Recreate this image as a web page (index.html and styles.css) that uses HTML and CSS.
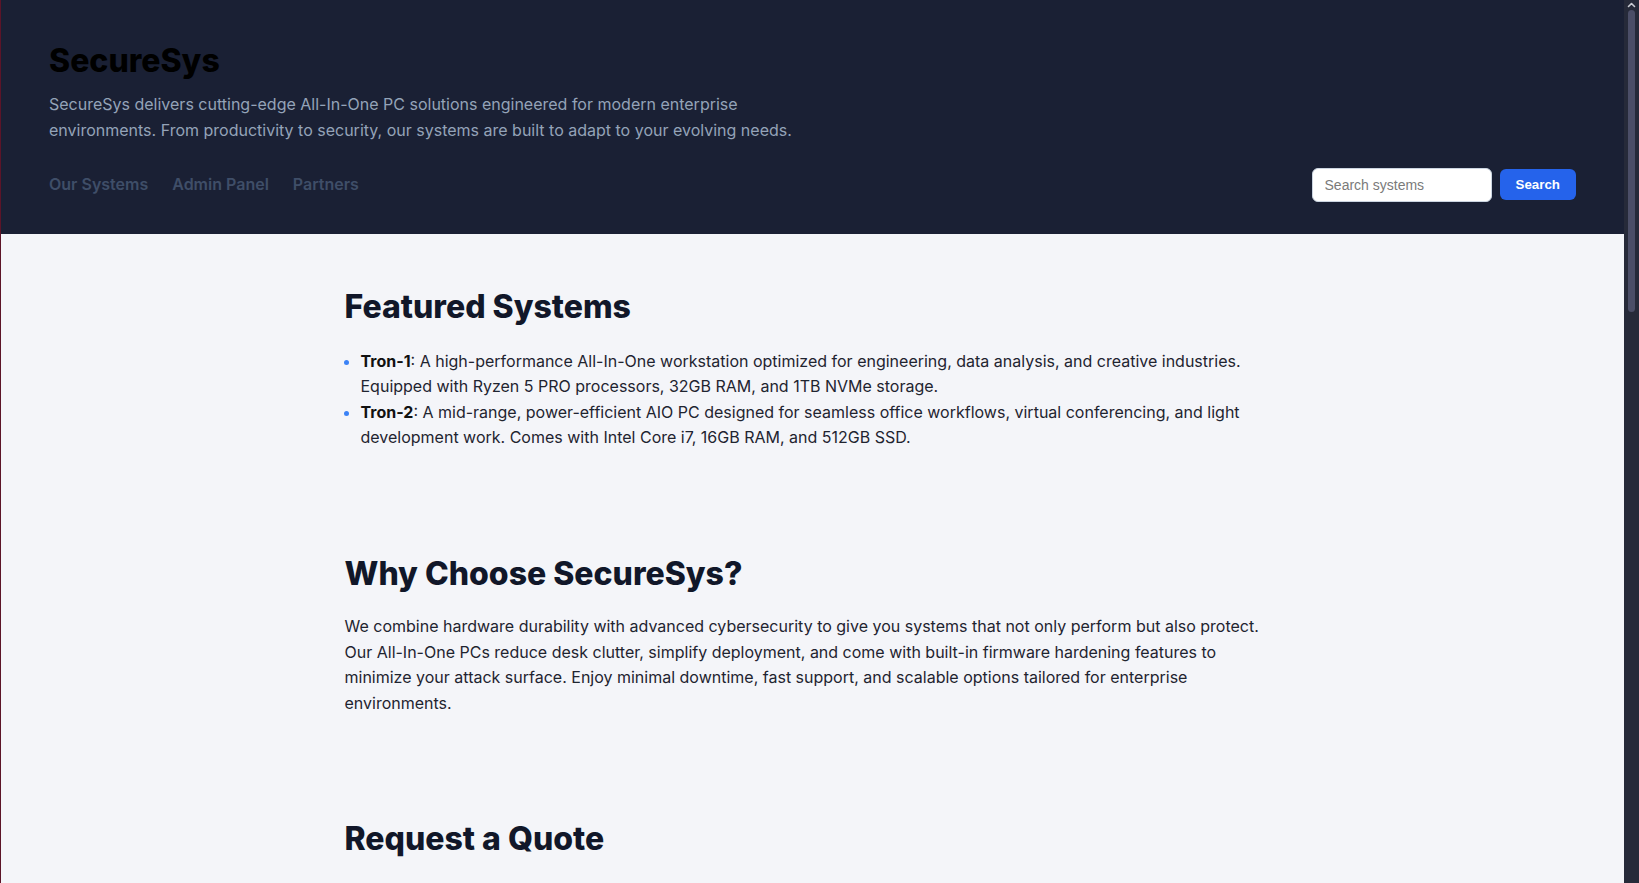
FILE: index.html
```html
<!DOCTYPE html>
<html lang="en">
<head>
<meta charset="utf-8">
<title>SecureSys</title>
<link rel="stylesheet" href="styles.css">
</head>
<body>
<header class="site-header">
  <h1 class="brand">SecureSys</h1>
  <p class="tagline">SecureSys delivers cutting-edge All-In-One PC solutions engineered for modern enterprise environments. From productivity to security, our systems are built to adapt to your evolving needs.</p>
  <div class="header-row">
    <nav class="nav">
      <a href="#" class="nav-link">Our Systems</a>
      <a href="#" class="nav-link">Admin Panel</a>
      <a href="#" class="nav-link">Partners</a>
    </nav>
    <form class="search" onsubmit="return false">
      <input class="search-input" type="text" placeholder="Search systems">
      <button class="search-btn" type="submit">Search</button>
    </form>
  </div>
</header>
<main class="content">
  <section class="section">
    <h2 class="section-title">Featured Systems</h2>
    <ul class="systems">
      <li><strong>Tron-1</strong>: A high-performance All-In-One workstation optimized for engineering, data analysis, and creative industries. Equipped with Ryzen 5 PRO processors, 32GB RAM, and 1TB NVMe storage.</li>
      <li><strong>Tron-2</strong>: A mid-range, power-efficient AIO PC designed for seamless office workflows, virtual conferencing, and light development work. Comes with Intel Core i7, 16GB RAM, and 512GB SSD.</li>
    </ul>
  </section>
  <section class="section">
    <h2 class="section-title">Why Choose SecureSys?</h2>
    <p class="text">We combine hardware durability with advanced cybersecurity to give you systems that not only perform but also protect. Our All-In-One PCs reduce desk clutter, simplify deployment, and come with built-in firmware hardening features to minimize your attack surface. Enjoy minimal downtime, fast support, and scalable options tailored for enterprise environments.</p>
  </section>
  <section class="section">
    <h2 class="section-title">Request a Quote</h2>
    <p class="text">Tell us about your organization and our team will prepare a tailored proposal for your deployment.</p>
  </section>
</main>
<div class="scrollbar" aria-hidden="true">
  <svg class="scroll-arrow" width="15" height="10" viewBox="0 0 15 10"><path d="M4.5 6.5 L7.5 3.5 L10.5 6.5" fill="none" stroke="#c9cbd3" stroke-width="1.6" stroke-linecap="round" stroke-linejoin="round"/></svg>
  <div class="scroll-thumb"></div>
</div>
</body>
</html>
```
FILE: styles.css
```css
* { box-sizing: border-box; }
html { margin: 0; padding: 0; }
body {
  margin: 0;
  padding: 0 15px 0 0;
  border-left: 1px solid #5c1428;
  background: #f4f5f9;
  color: #1f2430;
  font-family: Inter, "Noto Sans", sans-serif;
  font-size: 16px;
  line-height: 1.6;
}
.site-header {
  background: #1a2034;
  padding: 42px 48px 32px 48px;
}
.brand {
  margin: 0 0 12px 0;
  font-size: 32px;
  font-weight: 800;
  line-height: 1.2;
  color: #000;
}
.tagline {
  margin: 0 0 24px 0;
  max-width: 760px;
  color: #94a3b8;
}
.header-row {
  display: flex;
  align-items: center;
  justify-content: space-between;
}
.nav { display: flex; gap: 24px; }
.nav-link {
  color: #3f4e68;
  text-decoration: none;
  font-weight: 600;
}
.search { display: flex; align-items: center; gap: 8px; }
.search-input {
  width: 180px;
  height: 34px;
  padding: 8px 12px;
  border: 1px solid #cbd5e1;
  border-radius: 6px;
  font-family: "Liberation Sans", Arial, sans-serif;
  font-size: 14px;
  background: #fff;
}
.search-input::placeholder { color: #7a7a7a; }
.search-btn {
  height: 31px;
  padding: 0 16px;
  border: 0;
  border-radius: 6px;
  background: #2563eb;
  color: #fff;
  font-family: "Liberation Sans", Arial, sans-serif;
  font-size: 13.33px;
  font-weight: 700;
}
.content {
  max-width: 1000px;
  margin: 0 auto;
  padding: 55px 32px 60px;
}
.section { margin-bottom: 105px; }
.section-title {
  margin: 0 0 24px 0;
  font-size: 32px;
  font-weight: 800;
  line-height: 36px;
  color: #111729;
}
.systems {
  margin: 0;
  padding-left: 16px;
}
.systems li::marker { color: #3b82f6; }
.systems strong { color: #111; }
.text { margin: -2px 0 0 0; }

/* decorative window scrollbar (overlay) */
.scrollbar {
  position: fixed;
  top: 0;
  right: 0;
  width: 15px;
  height: 100vh;
  background: #262a39;
}
.scroll-arrow { display: block; }
.scroll-thumb {
  margin: 0 0 0 4px;
  width: 7px;
  height: 302px;
  border-radius: 4px;
  background: #4b4e67;
}
```
